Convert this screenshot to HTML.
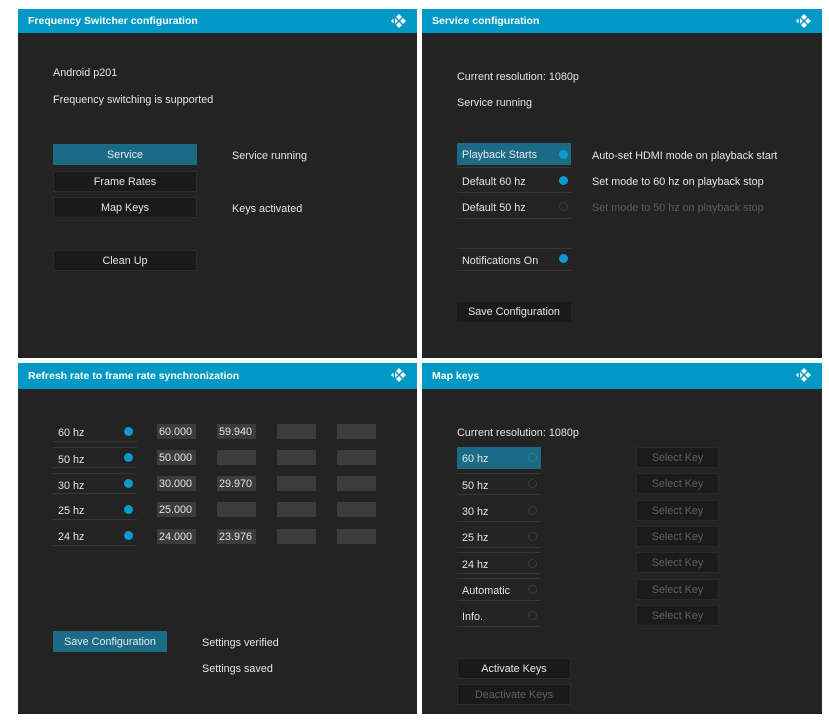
<!DOCTYPE html>
<html><head><meta charset="utf-8"><style>
*{margin:0;padding:0;box-sizing:border-box}
body{width:829px;height:727px;background:#fff;position:relative;overflow:hidden;font-family:"Liberation Sans",sans-serif;font-size:10.8px;color:#e4e4e4}
.p{position:absolute;background:#232323}
.h{position:absolute;left:0;right:0;top:0;height:24px;background:#0099c6;color:#fff;font-weight:bold;font-size:10.5px;line-height:24px;padding-left:10px}
.h svg{position:absolute;right:10px;top:4px}
.a{position:absolute;white-space:nowrap;margin-top:1px}
.b{position:absolute;background:#1a1a1a;text-align:center;border:1px solid #2c2c2c;line-height:21px}
.f{background:#1c6b86;border-color:#1c6b86;color:#e8e8e8}
.r{position:absolute;border-bottom:1px solid #363636;line-height:24px;padding-left:5px}
.d{position:absolute;width:9px;height:9px;border-radius:50%;background:#0a9ad0}
.o{position:absolute;width:9px;height:9px;border-radius:50%;border:1px solid #3a3a3a}
.x{position:absolute;background:#3c3c3c;height:15px;line-height:17px;padding-left:2px;width:39px}
.k{position:absolute;background:#1b1b1b;border:1px solid #2a2a2a;color:#5f5f5f;text-align:center;width:83px;height:21px;line-height:21px}
</style></head><body>
<svg width="0" height="0" style="position:absolute"><defs><g id="kd" fill="#fff"><path d="M2 8 L4.5 5.5 L4.5 10.5Z"/><path d="M10 1 L13 4 L10 7 L7 4Z"/><path d="M14 5 L17 8 L14 11 L11 8Z"/><path d="M10 9 L13 12 L10 15 L7 12Z"/><path d="M6 5 L9 8 L6 11Z" opacity=".9"/></g></defs></svg>

<div class="p" style="left:18px;top:9px;width:399px;height:349px">
<div class="h">Frequency Switcher configuration<svg width="18" height="16"><use href="#kd"/></svg></div>
<div class="a" style="left:35px;top:57px">Android p201</div>
<div class="a" style="left:35px;top:84px">Frequency switching is supported</div>
<div class="b f" style="left:35px;top:135px;width:144px;height:21px">Service</div>
<div class="b" style="left:35px;top:162px;width:144px;height:21px">Frame Rates</div>
<div class="b" style="left:35px;top:188px;width:144px;height:21px">Map Keys</div>
<div class="b" style="left:35px;top:241px;width:144px;height:21px">Clean Up</div>
<div class="a" style="left:214px;top:140px">Service running</div>
<div class="a" style="left:214px;top:193px">Keys activated</div>
</div>

<div class="p" style="left:422px;top:9px;width:400px;height:349px">
<div class="h">Service configuration<svg width="18" height="16"><use href="#kd"/></svg></div>
<div class="a" style="left:35px;top:61px">Current resolution: 1080p</div>
<div class="a" style="left:35px;top:87px">Service running</div>
<div class="r f" style="left:35px;top:134px;width:114px;height:22px;border:none">Playback Starts</div><div class="d" style="left:137px;top:141px"></div>
<div style="position:absolute;left:35px;top:158px;width:114px;border-top:1px solid #363636"></div>
<div class="r" style="left:35px;top:161px;width:114px;height:23px">Default 60 hz</div><div class="d" style="left:137px;top:167px"></div>
<div class="r" style="left:35px;top:187px;width:114px;height:23px">Default 50 hz</div><div class="o" style="left:137px;top:193px"></div>
<div style="position:absolute;left:35px;top:239px;width:114px;border-top:1px solid #363636"></div>
<div class="r" style="left:35px;top:240px;width:114px;height:22px">Notifications On</div><div class="d" style="left:137px;top:245px"></div>
<div class="a" style="left:170px;top:140px">Auto-set HDMI mode on playback start</div>
<div class="a" style="left:170px;top:166px">Set mode to 60 hz on playback stop</div>
<div class="a" style="left:170px;top:192px;color:#5a5a5a">Set mode to 50 hz on playback stop</div>
<div class="b" style="left:35px;top:293px;width:114px;height:20px;border:none">Save Configuration</div>
</div>

<div class="p" style="left:18px;top:363px;width:399px;height:351px">
<div class="h" style="height:26px;line-height:26px">Refresh rate to frame rate synchronization<svg width="18" height="16"><use href="#kd"/></svg></div>
<div class="r" style="left:35px;top:58px;width:84px;height:21px">60 hz</div><div class="d" style="left:106px;top:64px"></div>
<div class="r" style="left:35px;top:84px;width:84px;height:21px;border-top:1px solid #363636">50 hz</div><div class="d" style="left:106px;top:90px"></div>
<div class="r" style="left:35px;top:110px;width:84px;height:21px;border-top:1px solid #363636">30 hz</div><div class="d" style="left:106px;top:116px"></div>
<div class="r" style="left:35px;top:136px;width:84px;height:21px">25 hz</div><div class="d" style="left:106px;top:142px"></div>
<div class="r" style="left:35px;top:162px;width:84px;height:21px">24 hz</div><div class="d" style="left:106px;top:168px"></div>
<div class="x" style="left:139px;top:61px">60.000</div><div class="x" style="left:199px;top:61px">59.940</div><div class="x" style="left:259px;top:61px"></div><div class="x" style="left:319px;top:61px"></div>
<div class="x" style="left:139px;top:87px">50.000</div><div class="x" style="left:199px;top:87px"></div><div class="x" style="left:259px;top:87px"></div><div class="x" style="left:319px;top:87px"></div>
<div class="x" style="left:139px;top:113px">30.000</div><div class="x" style="left:199px;top:113px">29.970</div><div class="x" style="left:259px;top:113px"></div><div class="x" style="left:319px;top:113px"></div>
<div class="x" style="left:139px;top:139px">25.000</div><div class="x" style="left:199px;top:139px"></div><div class="x" style="left:259px;top:139px"></div><div class="x" style="left:319px;top:139px"></div>
<div class="x" style="left:139px;top:166px">24.000</div><div class="x" style="left:199px;top:166px">23.976</div><div class="x" style="left:259px;top:166px"></div><div class="x" style="left:319px;top:166px"></div>
<div class="b f" style="left:35px;top:268px;width:114px;height:21px">Save Configuration</div>
<div class="a" style="left:184px;top:273px">Settings verified</div>
<div class="a" style="left:184px;top:299px">Settings saved</div>
</div>

<div class="p" style="left:422px;top:363px;width:400px;height:351px">
<div class="h" style="height:26px;line-height:26px">Map keys<svg width="18" height="16"><use href="#kd"/></svg></div>
<div class="a" style="left:35px;top:63px">Current resolution: 1080p</div>
<div class="r f" style="left:35px;top:84px;width:84px;height:22px;border:none">60 hz</div><div class="o" style="left:106px;top:90px;border-color:#2f7a94"></div>
<div class="r" style="left:35px;top:110px;width:84px;height:22px;border-top:1px solid #363636">50 hz</div><div class="o" style="left:106px;top:116px"></div>
<div class="r" style="left:35px;top:137px;width:84px;height:22px">30 hz</div><div class="o" style="left:106px;top:143px"></div>
<div class="r" style="left:35px;top:163px;width:84px;height:22px">25 hz</div><div class="o" style="left:106px;top:169px"></div>
<div class="r" style="left:35px;top:189px;width:84px;height:22px;border-top:1px solid #363636">24 hz</div><div class="o" style="left:106px;top:196px"></div>
<div class="r" style="left:35px;top:215px;width:84px;height:23px;border-top:1px solid #363636">Automatic</div><div class="o" style="left:106px;top:222px"></div>
<div class="r" style="left:35px;top:242px;width:84px;height:22px">Info.</div><div class="o" style="left:106px;top:248px"></div>
<div class="k" style="left:214px;top:84px">Select Key</div>
<div class="k" style="left:214px;top:110px">Select Key</div>
<div class="k" style="left:214px;top:137px">Select Key</div>
<div class="k" style="left:214px;top:163px">Select Key</div>
<div class="k" style="left:214px;top:189px">Select Key</div>
<div class="k" style="left:214px;top:216px">Select Key</div>
<div class="k" style="left:214px;top:242px">Select Key</div>
<div class="b" style="left:35px;top:295px;width:114px;height:21px">Activate Keys</div>
<div class="b" style="left:35px;top:321px;width:114px;height:21px;color:#5f5f5f">Deactivate Keys</div>
</div>
</body></html>
